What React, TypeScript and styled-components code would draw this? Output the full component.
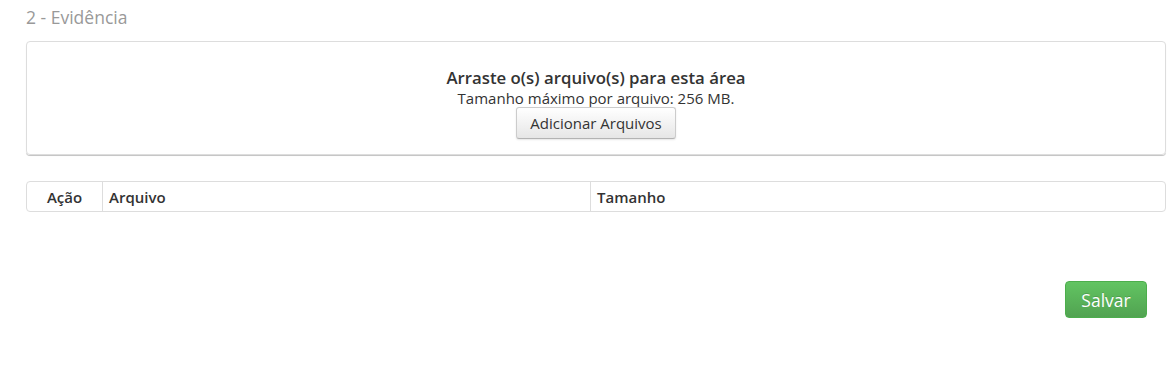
import React from "react";
import styled, { createGlobalStyle } from "styled-components";

const GlobalStyle = createGlobalStyle`
  body {
    margin: 0;
    background: #fff;
    font-family: "Open Sans", "Liberation Sans", sans-serif;
    color: #333;
  }
`;

const Page = styled.div`
  padding: 7px 2px 0 26px;
`;

const SectionTitle = styled.h4`
  margin: 0 0 13px;
  font-size: 17.5px;
  font-weight: 400;
  line-height: 21px;
  color: #999;
`;

const DropZone = styled.div`
  display: flex;
  flex-direction: column;
  align-items: center;
  height: 114px;
  padding-top: 24px;
  box-sizing: border-box;
  border: 1px solid #ddd;
  border-radius: 4px;
  box-shadow: 0 1px 1px rgba(0, 0, 0, 0.08), 0 1px 0 #d6d6d6;
`;

const DropTitle = styled.div`
  font-size: 16.8px;
  font-weight: 600;
  line-height: 23px;
  color: #333;
`;

const DropHint = styled.div`
  font-size: 15px;
  line-height: 19px;
  color: #333;
`;

const AddButton = styled.button`
  margin-top: -1px;
  height: 32px;
  padding: 0 13px;
  font-family: inherit;
  font-size: 15px;
  color: #333;
  background: linear-gradient(#fff, #e6e6e6);
  border: 1px solid #ccc;
  border-bottom-color: #b3b3b3;
  border-radius: 3px;
  box-shadow: 0 1px 2px rgba(0, 0, 0, 0.1);
  cursor: pointer;
`;

const FileTable = styled.div`
  display: grid;
  grid-template-columns: 75px 488px 1fr;
  margin-top: 26px;
  height: 31px;
  box-sizing: border-box;
  border: 1px solid #ddd;
  border-radius: 4px;
`;

const HeadCell = styled.div<{ $center?: boolean; $first?: boolean }>`
  display: flex;
  align-items: center;
  justify-content: ${(p) => (p.$center ? "center" : "flex-start")};
  padding: 0 6px;
  font-size: 15px;
  font-weight: 600;
  color: #333;
  border-left: ${(p) => (p.$first ? "none" : "1px solid #ddd")};
`;

const Footer = styled.div`
  display: flex;
  justify-content: flex-end;
  padding: 69px 19px 0 0;
`;

const SaveButton = styled.button`
  width: 82px;
  height: 37px;
  font-family: inherit;
  font-size: 17.5px;
  color: #fff;
  background: linear-gradient(#62c462, #51a351);
  border: 1px solid #4cae4c;
  border-radius: 4px;
  text-shadow: 0 -1px 0 rgba(0, 0, 0, 0.15);
  cursor: pointer;
`;

export default function App() {
  return (
    <>
      <GlobalStyle />
      <Page>
        <SectionTitle>2 - Evidência</SectionTitle>
        <DropZone>
          <DropTitle>Arraste o(s) arquivo(s) para esta área</DropTitle>
          <DropHint>Tamanho máximo por arquivo: 256 MB.</DropHint>
          <AddButton>Adicionar Arquivos</AddButton>
        </DropZone>
        <FileTable>
          <HeadCell $center $first>Ação</HeadCell>
          <HeadCell>Arquivo</HeadCell>
          <HeadCell>Tamanho</HeadCell>
        </FileTable>
        <Footer>
          <SaveButton>Salvar</SaveButton>
        </Footer>
      </Page>
    </>
  );
}
